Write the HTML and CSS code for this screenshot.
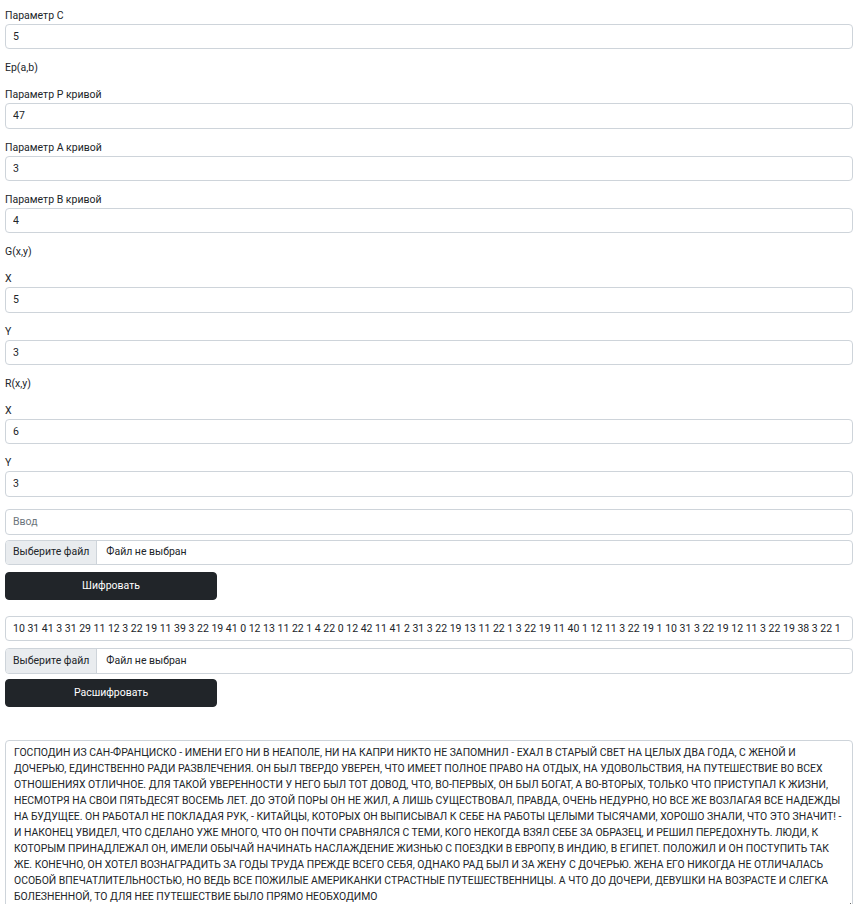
FILE: index.html
```html
<!DOCTYPE html>
<html lang="ru">
<head>
<meta charset="utf-8">
<title>Эллиптическая криптография</title>
<link rel="stylesheet" href="styles.css">
</head>
<body>
<div class="page">
  <div class="params">
    <div class="field">
      <label class="form-label" for="c">Параметр С</label>
      <input class="form-control" id="c" type="text" value="5">
    </div>
    <div class="caption">Ep(a,b)</div>
    <div class="field">
      <label class="form-label" for="p">Параметр Р кривой</label>
      <input class="form-control" id="p" type="text" value="47">
    </div>
    <div class="field">
      <label class="form-label" for="a">Параметр А кривой</label>
      <input class="form-control" id="a" type="text" value="3">
    </div>
    <div class="field">
      <label class="form-label" for="b">Параметр В кривой</label>
      <input class="form-control" id="b" type="text" value="4">
    </div>
    <div class="caption">G(x,y)</div>
    <div class="field">
      <label class="form-label" for="gx">X</label>
      <input class="form-control" id="gx" type="text" value="5">
    </div>
    <div class="field">
      <label class="form-label" for="gy">Y</label>
      <input class="form-control" id="gy" type="text" value="3">
    </div>
    <div class="caption">R(x,y)</div>
    <div class="field">
      <label class="form-label" for="rx">X</label>
      <input class="form-control" id="rx" type="text" value="6">
    </div>
    <div class="field">
      <label class="form-label" for="ry">Y</label>
      <input class="form-control" id="ry" type="text" value="3">
    </div>
  </div>

  <div class="block block-encrypt">
    <input class="form-control" type="text" placeholder="Ввод">
    <div class="file-control gap-file">
      <span class="file-btn">Выберите файл</span>
      <span class="file-name">Файл не выбран</span>
    </div>
    <button class="btn gap-btn" type="button">Шифровать</button>
  </div>

  <div class="block block-decrypt">
    <input class="form-control" type="text" value="10 31 41 3 31 29 11 12 3 22 19 11 39 3 22 19 41 0 12 13 11 22 1 4 22 0 12 42 11 41 2 31 3 22 19 13 11 22 1 3 22 19 11 40 1 12 11 3 22 19 1 10 31 3 22 19 12 11 3 22 19 38 3 22 1">
    <div class="file-control gap-file2">
      <span class="file-btn">Выберите файл</span>
      <span class="file-name">Файл не выбран</span>
    </div>
    <button class="btn gap-btn2" type="button">Расшифровать</button>
  </div>

  <textarea class="form-control output" rows="10">ГОСПОДИН ИЗ САН-ФРАНЦИСКО - ИМЕНИ ЕГО НИ В НЕАПОЛЕ, НИ НА КАПРИ НИКТО НЕ ЗАПОМНИЛ - ЕХАЛ В СТАРЫЙ СВЕТ НА ЦЕЛЫХ ДВА ГОДА, С ЖЕНОЙ И ДОЧЕРЬЮ, ЕДИНСТВЕННО РАДИ РАЗВЛЕЧЕНИЯ. ОН БЫЛ ТВЕРДО УВЕРЕН, ЧТО ИМЕЕТ ПОЛНОЕ ПРАВО НА ОТДЫХ, НА УДОВОЛЬСТВИЯ, НА ПУТЕШЕСТВИЕ ВО ВСЕХ ОТНОШЕНИЯХ ОТЛИЧНОЕ. ДЛЯ ТАКОЙ УВЕРЕННОСТИ У НЕГО БЫЛ ТОТ ДОВОД, ЧТО, ВО-ПЕРВЫХ, ОН БЫЛ БОГАТ, А ВО-ВТОРЫХ, ТОЛЬКО ЧТО ПРИСТУПАЛ К ЖИЗНИ, НЕСМОТРЯ НА СВОИ ПЯТЬДЕСЯТ ВОСЕМЬ ЛЕТ. ДО ЭТОЙ ПОРЫ ОН НЕ ЖИЛ, А ЛИШЬ СУЩЕСТВОВАЛ, ПРАВДА, ОЧЕНЬ НЕДУРНО, НО ВСЕ ЖЕ ВОЗЛАГАЯ ВСЕ НАДЕЖДЫ НА БУДУЩЕЕ. ОН РАБОТАЛ НЕ ПОКЛАДАЯ РУК, - КИТАЙЦЫ, КОТОРЫХ ОН ВЫПИСЫВАЛ К СЕБЕ НА РАБОТЫ ЦЕЛЫМИ ТЫСЯЧАМИ, ХОРОШО ЗНАЛИ, ЧТО ЭТО ЗНАЧИТ! - И НАКОНЕЦ УВИДЕЛ, ЧТО СДЕЛАНО УЖЕ МНОГО, ЧТО ОН ПОЧТИ СРАВНЯЛСЯ С ТЕМИ, КОГО НЕКОГДА ВЗЯЛ СЕБЕ ЗА ОБРАЗЕЦ, И РЕШИЛ ПЕРЕДОХНУТЬ. ЛЮДИ, К КОТОРЫМ ПРИНАДЛЕЖАЛ ОН, ИМЕЛИ ОБЫЧАЙ НАЧИНАТЬ НАСЛАЖДЕНИЕ ЖИЗНЬЮ С ПОЕЗДКИ В ЕВРОПУ, В ИНДИЮ, В ЕГИПЕТ. ПОЛОЖИЛ И ОН ПОСТУПИТЬ ТАК ЖЕ. КОНЕЧНО, ОН ХОТЕЛ ВОЗНАГРАДИТЬ ЗА ГОДЫ ТРУДА ПРЕЖДЕ ВСЕГО СЕБЯ, ОДНАКО РАД БЫЛ И ЗА ЖЕНУ С ДОЧЕРЬЮ. ЖЕНА ЕГО НИКОГДА НЕ ОТЛИЧАЛАСЬ ОСОБОЙ ВПЕЧАТЛИТЕЛЬНОСТЬЮ, НО ВЕДЬ ВСЕ ПОЖИЛЫЕ АМЕРИКАНКИ СТРАСТНЫЕ ПУТЕШЕСТВЕННИЦЫ. А ЧТО ДО ДОЧЕРИ, ДЕВУШКИ НА ВОЗРАСТЕ И СЛЕГКА БОЛЕЗНЕННОЙ, ТО ДЛЯ НЕЕ ПУТЕШЕСТВИЕ БЫЛО ПРЯМО НЕОБХОДИМО</textarea>
</div>
</body>
</html>
```
FILE: styles.css
```css
html, body {
  margin: 0;
  padding: 0;
  overflow: hidden;
  background: #fff;
}

body {
  font-family: Roboto, "Liberation Sans", sans-serif;
  font-size: 10.5px;
  line-height: 16px;
  color: #212529;
}

.page {
  padding: 8px 6px 0 5px;
  display: flex;
  flex-direction: column;
}

.params {
  display: flex;
  flex-direction: column;
  gap: 11px;
}

.field {
  display: flex;
  flex-direction: column;
}

.form-label,
.caption {
  display: block;
  margin: 0;
  line-height: 16px;
  height: 16px;
}

.form-control {
  box-sizing: border-box;
  display: block;
  width: 100%;
  height: 25.33px;
  margin: 0;
  padding: 0 7px;
  font-family: Roboto, "Liberation Sans", sans-serif;
  font-size: 10.5px;
  line-height: 16px;
  color: #212529;
  background: #fff;
  border: 1px solid #ced4da;
  border-radius: 4px;
  outline: none;
}

.form-control::placeholder {
  color: #6c757d;
  opacity: 1;
}

.block {
  display: flex;
  flex-direction: column;
}

.block-encrypt {
  margin-top: 12.67px;
}

.block-decrypt {
  margin-top: 16px;
}

.file-control {
  box-sizing: border-box;
  display: flex;
  align-items: stretch;
  height: 25.33px;
  border: 1px solid #ced4da;
  border-radius: 4px;
  overflow: hidden;
  background: #fff;
}

.file-btn {
  display: flex;
  align-items: center;
  padding: 0 7px;
  background: #e9ecef;
  border-right: 1px solid #ced4da;
  color: #212529;
}

.file-name {
  display: flex;
  align-items: center;
  padding-left: 9px;
  color: #212529;
}

.gap-file { margin-top: 5px; }
.gap-btn { margin-top: 7px; }
.gap-file2 { margin-top: 7px; }
.gap-btn2 { margin-top: 5.33px; }

.btn {
  box-sizing: border-box;
  width: 212px;
  height: 28px;
  padding: 0 8px;
  border: 1px solid #212529;
  border-radius: 4px;
  background: #212529;
  color: #fff;
  font-family: Roboto, "Liberation Sans", sans-serif;
  font-size: 10.5px;
  font-weight: 400;
  line-height: 16px;
  text-align: center;
  cursor: pointer;
}

.output {
  height: 172px;
  margin-top: 33px;
  padding: 4px 9px 4px 8px;
  font-size: 10.41px;
  resize: vertical;
  overflow: hidden;
}
```
